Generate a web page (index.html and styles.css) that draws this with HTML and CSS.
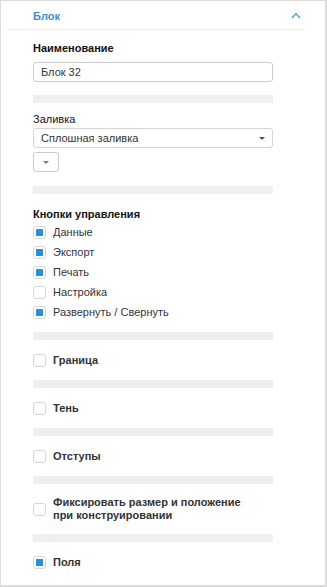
FILE: index.html
```html
<!DOCTYPE html>
<html lang="ru">
<head>
    <meta charset="UTF-8">
    <meta name="viewport" content="width=device-width, initial-scale=1.0">
    <title>Блок</title>
    <link rel="stylesheet" href="styles.css">
</head>
<body>

    <div class="panel">

        <!-- Header -->
        <div class="panel-header">
            <span class="panel-title">Блок</span>
            <svg class="chevron" width="10" height="7" viewBox="0 0 10 7">
                <polyline points="1,6 5,1.8 9,6" fill="none" stroke="#4a9be0" stroke-width="1.3"/>
            </svg>
        </div>

        <div class="panel-body">

            <!-- Name -->
            <div class="section section-name">
                <div class="label bold">Наименование</div>
                <input type="text" class="input-field" value="Блок 32">
            </div>
            <div class="divider"></div>

            <!-- Fill -->
            <div class="section section-fill">
                <div class="label">Заливка</div>
                <div class="select">
                    <span>Сплошная заливка</span>
                    <span class="arrow"></span>
                </div>
                <div class="color-btn"><span class="arrow"></span></div>
            </div>
            <div class="divider"></div>

            <!-- Buttons -->
            <div class="section section-buttons">
                <div class="label bold">Кнопки управления</div>
                <div class="check-row"><span class="checkbox checked"></span>Данные</div>
                <div class="check-row"><span class="checkbox checked"></span>Экспорт</div>
                <div class="check-row"><span class="checkbox checked"></span>Печать</div>
                <div class="check-row"><span class="checkbox"></span>Настройка</div>
                <div class="check-row"><span class="checkbox checked"></span>Развернуть / Свернуть</div>
            </div>
            <div class="divider"></div>

            <div class="section section-single">
                <div class="check-row bold"><span class="checkbox"></span>Граница</div>
            </div>
            <div class="divider"></div>

            <div class="section section-single">
                <div class="check-row bold"><span class="checkbox"></span>Тень</div>
            </div>
            <div class="divider"></div>

            <div class="section section-single">
                <div class="check-row bold"><span class="checkbox"></span>Отступы</div>
            </div>
            <div class="divider"></div>

            <div class="section section-double">
                <div class="check-row bold"><span class="checkbox"></span>Фиксировать размер и положение<br>при конструировании</div>
            </div>
            <div class="divider"></div>

            <div class="section section-single">
                <div class="check-row bold"><span class="checkbox checked"></span>Поля</div>
            </div>

        </div>
    </div>

</body>
</html>
```

FILE: styles.css
```css
/* Reset */
* {
    margin: 0;
    padding: 0;
    box-sizing: border-box;
    font-family: 'Liberation Sans', Arial, sans-serif;
}

body {
    background: #ffffff;
}

/* Panel */
.panel {
    width: 327px;
    height: 587px;
    border-top: 1px solid #dcdcdc;
    border-left: 1px solid #dcdcdc;
    border-right: 2px solid #dcdcdc;
    border-bottom: 2px solid #dcdcdc;
    background: #ffffff;
}

/* Header */
.panel-header {
    height: 29px;
    margin: 0 20px 0 6px;
    padding: 0 4px 0 26px;
    border-bottom: 1px solid #eeeeee;
    display: flex;
    align-items: center;
    justify-content: space-between;
}

.panel-title {
    font-size: 11px;
    font-weight: 700;
    color: #3b8dd5;
    margin-top: 1px;
}

.chevron {
    display: block;
    margin-top: 1px;
}

/* Body */
.panel-body {
    width: 272px;
    padding-left: 32px;
}

.label {
    font-size: 11px;
    line-height: 14px;
    color: #111;
}

.bold {
    font-weight: 700;
}

.divider {
    height: 8px;
    background: #efefef;
}

/* Name */
.section-name {
    padding: 11px 0 13px;
}

.input-field {
    display: block;
    width: 100%;
    height: 20px;
    margin-top: 7px;
    padding: 0 7px;
    border: 1px solid #cccccc;
    border-radius: 3px;
    font-size: 11px;
    color: #333;
    outline: none;
}

/* Fill */
.section-fill {
    padding: 9px 0 14px;
}

.select {
    height: 20px;
    margin-top: 2px;
    padding: 0 7px;
    border: 1px solid #d4d4d4;
    border-radius: 3px;
    display: flex;
    align-items: center;
    justify-content: space-between;
    font-size: 11px;
    color: #333;
}

.arrow {
    width: 0;
    height: 0;
    border-left: 3px solid transparent;
    border-right: 3px solid transparent;
    border-top: 3px solid #555;
}

.color-btn {
    width: 26px;
    height: 20px;
    margin-top: 4px;
    border: 1px solid #cccccc;
    border-radius: 3px;
    display: flex;
    align-items: center;
    justify-content: center;
}

.color-btn .arrow {
    border-top-color: #777;
}

/* Buttons */
.section-buttons {
    padding: 13px 0 10px;
}

.section-buttons .label {
    margin-bottom: 1px;
}

.check-row {
    display: flex;
    align-items: center;
    min-height: 20px;
    font-size: 11px;
    line-height: 13px;
    color: #333;
}

.checkbox {
    flex-shrink: 0;
    width: 13px;
    height: 13px;
    margin-right: 7px;
    border: 1px solid #d6d6d6;
    border-radius: 3px;
    display: flex;
    align-items: center;
    justify-content: center;
    background: #fff;
}

.checkbox.checked::after {
    content: "";
    width: 7px;
    height: 7px;
    background: #2a8fd4;
}

/* Single options */
.section-single {
    padding: 10px 0;
}

.section-double {
    padding: 12px 0;
}
```
